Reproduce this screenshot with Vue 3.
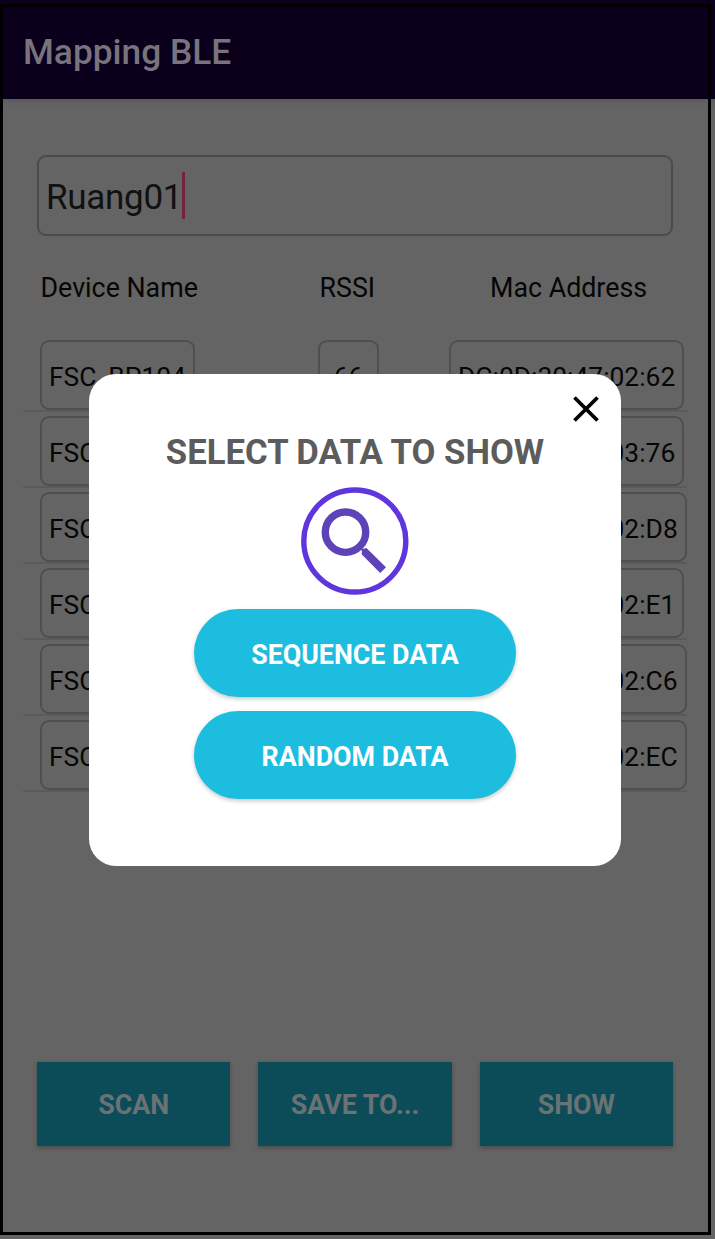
<script setup>
const rows = [
  { name: 'FSC_BP104', rssi: '66', mac: 'DC:0D:30:47:02:62' },
  { name: 'FSC_BP104', rssi: '70', mac: 'DC:0D:30:47:03:76' },
  { name: 'FSC_BP104', rssi: '72', mac: 'DC:0D:30:47:02:D8' },
  { name: 'FSC_BP104', rssi: '75', mac: 'DC:0D:30:47:02:E1' },
  { name: 'FSC_BP104', rssi: '78', mac: 'DC:0D:30:47:02:C6' },
  { name: 'FSC_BP104', rssi: '81', mac: 'DC:0D:30:47:02:EC' },
]
const actions = ['SCAN', 'SAVE TO...', 'SHOW']
</script>

<template>
  <div class="screen">
    <header class="bar">Mapping BLE</header>
    <main class="body">
      <div class="room"><span>Ruang01</span><i class="caret"></i></div>
      <div class="heads">
        <span>Device Name</span><span class="h-rssi">RSSI</span><span class="h-mac">Mac Address</span>
      </div>
      <div class="list">
        <div v-for="row in rows" :key="row.mac" class="row">
          <span class="cell">{{ row.name }}</span>
          <span class="cell rssi">{{ row.rssi }}</span>
          <span class="cell">{{ row.mac }}</span>
        </div>
      </div>
      <div class="actions">
        <button v-for="a in actions" :key="a">{{ a }}</button>
      </div>
    </main>
    <div class="frame"></div>
    <section class="dialog">
      <svg class="close" width="26" height="26" viewBox="0 0 26 26">
        <path d="M1.5 1.5 24.5 24.5M24.5 1.5 1.5 24.5" stroke="#000" stroke-width="3.8" fill="none" />
      </svg>
      <h2>SELECT DATA TO SHOW</h2>
      <svg class="search" width="108" height="108" viewBox="0 0 108 108">
        <circle cx="53.8" cy="54" r="51" fill="none" stroke="#5f36de" stroke-width="5.4" />
        <circle cx="44.5" cy="45.2" r="20.2" fill="none" stroke="#5e43b8" stroke-width="7.4" />
        <path d="M59 59 61.5 62 65.4 61 85 80.2 79.2 86 60.8 67.6 60.8 63.5 57.5 60.5Z" fill="#5e43b8" />
      </svg>
      <button class="pill">SEQUENCE DATA</button>
      <button class="pill">RANDOM DATA</button>
    </section>
  </div>
</template>

<style>
body { margin: 0; background: #646464; }
</style>

<style scoped>
.screen {
  position: relative;
  width: 715px;
  height: 1239px;
  overflow: hidden;
  background: #646464;
  font-family: Roboto, "Liberation Sans", sans-serif;
  color: #060606;
}
.bar {
  box-sizing: border-box;
  height: 99px;
  padding: 32px 0 0 23px;
  background: #0a001c;
  color: #78737c;
  font-size: 35.3px;
  line-height: 41px;
  font-weight: 500;
  box-shadow: 0 1px 6px rgba(50, 50, 50, 0.3);
}
.body { padding: 56px 28px 0 23px; }
.room {
  box-sizing: border-box;
  display: flex;
  align-items: center;
  width: 636px;
  height: 81px;
  margin-left: 14px;
  padding-left: 7px;
  border: 2px solid #4b4b4b;
  border-radius: 9px;
  font-size: 35px;
  color: #111;
}
.room span { padding-top: 4px; letter-spacing: -0.3px; }
.caret { width: 3px; height: 47px; background: #732340; }
.heads, .row {
  display: grid;
  grid-template-columns: 278px 131px 255px;
}
.heads {
  margin-top: 35px;
  padding-left: 17.5px;
  height: 34px;
  line-height: 34px;
  font-size: 26.8px;
}
.h-rssi { padding-left: 1px; }
.h-mac { padding-left: 40.5px; }
.list { margin-top: 35px; }
.row {
  box-sizing: border-box;
  height: 72px;
  margin-bottom: 4px;
  padding-left: 17px;
  border-bottom: 2px solid #5a5a5a;
  width: 664px;
}
.cell {
  box-sizing: border-box;
  width: max-content;
  height: 70px;
  padding: 0 7px;
  border: 2px solid #4f4f4f;
  border-radius: 9px;
  font-size: 26.4px;
  line-height: 70px;
}
.rssi { width: 61px; padding: 0; text-align: center; }
.actions { display: flex; gap: 28px; margin: 270px 0 0 14px; width: 636px; }
button { border: 0; padding: 0; font-family: inherit; font-weight: 700; font-size: 26.8px; }
.actions button {
  flex: 1;
  height: 84px;
  padding-top: 1px;
  background: #0c4c59;
  color: #6b7274;
  box-shadow: 0 2px 4px rgba(40, 40, 40, 0.4);
}
.frame {
  position: absolute;
  box-sizing: border-box;
  left: 0;
  top: 4px;
  width: 711px;
  height: 1231px;
  border: 3px solid #000;
}
.dialog {
  position: absolute;
  left: 89px;
  top: 374px;
  width: 532px;
  height: 492px;
  border-radius: 27px;
  background: #fff;
  display: flex;
  flex-direction: column;
  align-items: center;
}
.close { margin: 22px 22px 0 0; align-self: flex-end; }
h2 { margin: 9px 0 0; font-size: 34.7px; line-height: 42px; font-weight: 700; color: #5c5c5c; white-space: nowrap; }
.search { margin: 14px 0 14px; }
.pill {
  flex: none;
  width: 322px;
  height: 88px;
  margin-bottom: 14px;
  padding-top: 3px;
  border-radius: 44px;
  background: #1dbddf;
  color: #fff;
  box-shadow: 0 2px 4px rgba(0, 0, 0, 0.22);
}
</style>
